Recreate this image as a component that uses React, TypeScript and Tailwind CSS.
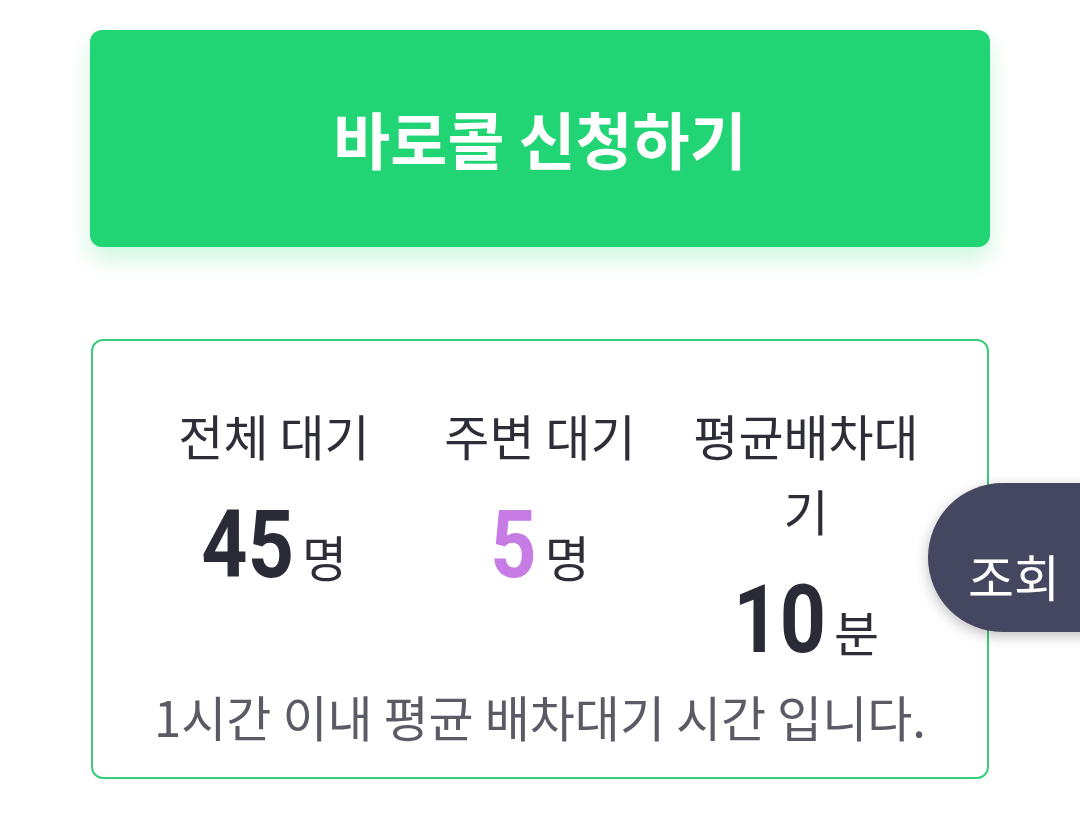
import React from "react";

const KR = "font-['Noto_Sans_CJK_KR','Noto_Sans',sans-serif]";

interface StatProps {
  label: string;
  value: string;
  unit: string;
  valueClass: string;
  shift: string;
}

const Stat = ({ label, value, unit, valueClass, shift }: StatProps) => (
  <div className="flex flex-col items-center">
    <div className="text-[49px] leading-[75px] text-[#2e2e38] text-center break-all">{label}</div>
    <div className="mt-[25px] flex items-baseline">
      <span
        className={`inline-block font-['Roboto',sans-serif] font-bold text-[95px] leading-none scale-x-[0.85] origin-right ${valueClass} ${shift}`}
      >
        {value}
      </span>
      <span className="ml-[8px] text-[49px] leading-none text-[#2e2e38]">{unit}</span>
    </div>
  </div>
);

export default function App() {
  return (
    <div className={`relative w-[1080px] h-[815px] bg-white overflow-hidden ${KR}`}>
      <div className="px-[90px] pt-[30px]">
        <button className="w-full h-[217px] rounded-[12px] bg-[#21d474] text-white text-[62px] font-bold shadow-[0_12px_22px_rgba(33,212,116,0.22)]">
          바로콜 신청하기
        </button>

        <div className="mt-[92px] mx-[1px] h-[440px] border-2 border-[#3bcd7a] rounded-[12px] px-[48px] pt-[56px]">
          <div className="grid grid-cols-3">
            <Stat label="전체 대기" value="45" unit="명" valueClass="text-[#2b2b37]" shift="-ml-[16px]" />
            <Stat label="주변 대기" value="5" unit="명" valueClass="text-[#c77be4]" shift="-ml-[8px]" />
            <Stat label="평균배차대기" value="10" unit="분" valueClass="text-[#2b2b37]" shift="-ml-[16px]" />
          </div>
          <p className="mt-[16px] text-center text-[49px] leading-[66px] text-[#5b5b66]">
            1시간 이내 평균 배차대기 시간 입니다.
          </p>
        </div>
      </div>

      {/* 조회 tab sits over the card edge */}
      <div className="absolute left-[928px] top-[483px] w-[170px] h-[149px] rounded-l-full bg-[#45465f] shadow-[0_4px_14px_rgba(0,0,0,0.25)]">
        <span className="absolute left-[40px] top-[62px] text-[50px] leading-[60px] text-white">조회</span>
      </div>
    </div>
  );
}
